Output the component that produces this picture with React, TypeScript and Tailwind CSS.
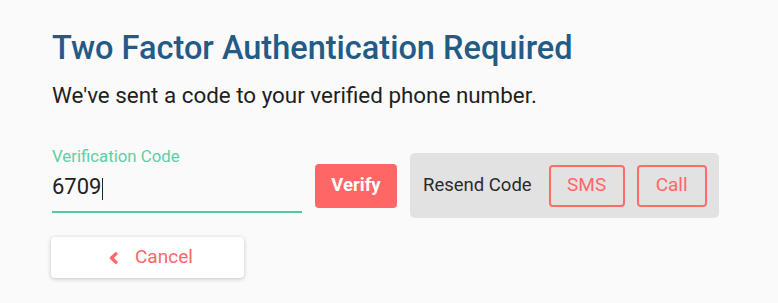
function Chevron() {
  return (
    <svg width="10" height="12" viewBox="0 0 10 12" className="shrink-0">
      <path
        d="M8 1.8 3.4 6 8 10.2"
        fill="none"
        stroke="currentColor"
        strokeWidth="3.2"
        strokeLinecap="round"
        strokeLinejoin="round"
      />
    </svg>
  );
}

export default function App() {
  return (
    <div
      className="min-h-[303px] w-full bg-[#fafafa] pl-[52px] pt-[28px] text-[#222]"
      style={{ fontFamily: 'Roboto, "Liberation Sans", sans-serif' }}
    >
      <h1 className="text-[32.5px] font-medium leading-[40px] text-[#245b86]">
        Two Factor Authentication Required
      </h1>
      <p className="mt-[13px] text-[22.4px] leading-[28px] text-[#1f1f1f]">
        We've sent a code to your verified phone number.
      </p>

      {/* code row */}
      <div className="mt-[37px] flex items-start">
        <div className="flex w-[250px] flex-col">
          <label className="text-[16.8px] leading-[20px] text-[#5ecfa5]">
            Verification Code
          </label>
          <div className="mt-[8px] flex items-start border-b-2 border-[#4ecba0] pb-[11px]">
            <span className="text-[22px] leading-[26px] text-[#222]">6709</span>
            <span className="ml-[1px] mt-[4px] h-[22px] w-px bg-[#222]" />
          </div>
        </div>

        <button className="ml-[13px] mt-[18px] h-[44px] w-[82px] rounded-[4px] bg-[#ff6666] text-[18.5px] font-bold text-white">
          Verify
        </button>

        <div className="ml-[13px] mt-[7px] flex h-[65px] w-[309px] items-center rounded-[5px] bg-[#e2e2e2] pl-[13px]">
          <span className="text-[18.5px] text-[#2a2a2a]">Resend Code</span>
          <button className="ml-[17px] h-[42px] w-[76px] rounded-[4px] border-2 border-[#ff6b6b] text-[19px] text-[#ff6666]">
            SMS
          </button>
          <button className="ml-[12px] h-[42px] w-[70px] rounded-[4px] border-2 border-[#ff6b6b] text-[19px] text-[#ff6666]">
            Call
          </button>
        </div>
      </div>

      <button className="-ml-px mt-[19px] flex h-[41px] w-[193px] items-center gap-[17px] rounded-[4px] bg-white pl-[57px] text-[19px] text-[#ff6666] shadow-[0_1px_4px_rgba(0,0,0,0.22)]">
        <Chevron />
        <span>Cancel</span>
      </button>
    </div>
  );
}
